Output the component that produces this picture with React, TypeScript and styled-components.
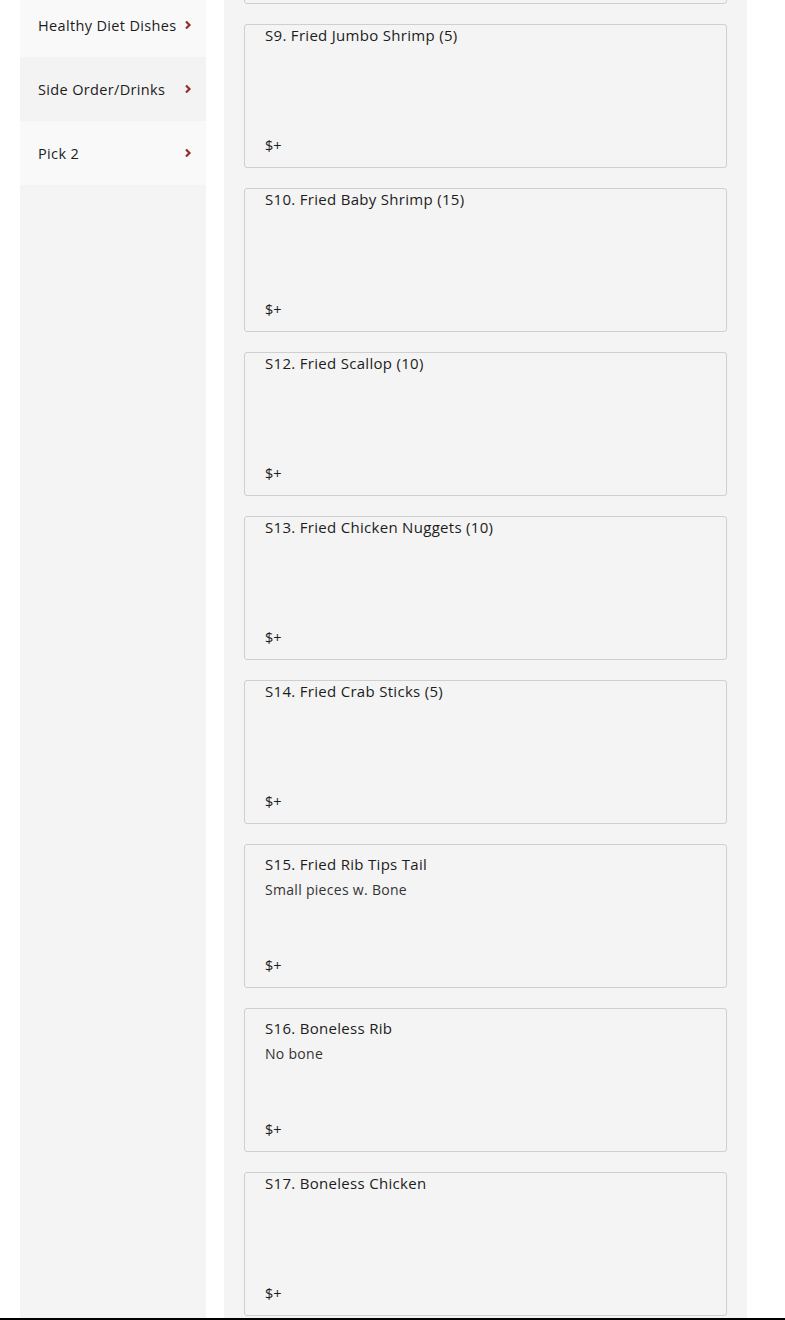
import React from 'react'
import styled, { createGlobalStyle } from 'styled-components'

const GlobalStyle = createGlobalStyle`
  body {
    margin: 0;
    background: #ffffff;
    font-family: 'Open Sans', 'Noto Sans', sans-serif;
    color: #222;
  }
`

const Page = styled.div`
  display: flex;
  align-items: stretch;
  gap: 18px;
  padding-left: 20px;
  margin-top: -160px;
  height: 1500px;
  overflow: hidden;
`

const Sidebar = styled.nav`
  width: 186px;
  flex-shrink: 0;
  padding-top: 153px;
  background: #f4f4f4;
`

const Category = styled.div<{ $alt?: boolean }>`
  height: 64px;
  display: flex;
  align-items: center;
  justify-content: space-between;
  padding: 0 14px 0 18px;
  background: ${p => (p.$alt ? '#f3f3f3' : '#f9f9f9')};
  font-family: 'Open Sans', sans-serif;
  font-size: 14.5px;
  font-weight: 500;
  letter-spacing: 0.35px;
  color: #1c1c1c;
  cursor: pointer;
`

const Chevron = styled.svg`
  width: 8px;
  height: 10px;
  flex-shrink: 0;
`

const Panel = styled.main`
  width: 523px;
  box-sizing: border-box;
  padding: 20px;
  background: #f4f4f4;
  display: flex;
  flex-direction: column;
  gap: 20px;
`

const Card = styled.div<{ $desc?: boolean }>`
  height: 144px;
  flex-shrink: 0;
  box-sizing: border-box;
  border: 1px solid #cfcfcf;
  border-radius: 3px;
  background: #f4f4f4;
  padding: ${p => (p.$desc ? '9px' : '0')} 20px 11px;
  display: flex;
  flex-direction: column;
`

const Title = styled.div`
  font-family: 'Open Sans', sans-serif;
  font-size: 15px;
  font-weight: 500;
  letter-spacing: 0.3px;
  line-height: 20px;
  color: #1c1c1c;
`

const Desc = styled.div`
  font-family: 'Open Sans', sans-serif;
  font-size: 14px;
  line-height: 20px;
  margin-top: 6px;
  color: #333;
  letter-spacing: 0.3px;
`

const Price = styled.div`
  margin-top: auto;
  font-family: 'Open Sans', sans-serif;
  font-size: 14.5px;
  font-weight: 500;
  line-height: 20px;
  color: #1c1c1c;
`

const BottomBar = styled.div`
  position: fixed;
  left: 0;
  right: 0;
  bottom: 0;
  height: 2px;
  background: #000;
`

const categories = ['Healthy Diet Dishes', 'Side Order/Drinks', 'Pick 2']

// first entry is the card scrolled above the top edge, only its bottom border shows
const items: { name?: string; desc?: string }[] = [
  {},
  { name: 'S9. Fried Jumbo Shrimp (5)' },
  { name: 'S10. Fried Baby Shrimp (15)' },
  { name: 'S12. Fried Scallop (10)' },
  { name: 'S13. Fried Chicken Nuggets (10)' },
  { name: 'S14. Fried Crab Sticks (5)' },
  { name: 'S15. Fried Rib Tips Tail', desc: 'Small pieces w. Bone' },
  { name: 'S16. Boneless Rib', desc: 'No bone' },
  { name: 'S17. Boneless Chicken' },
]

const App: React.FC = () => (
  <>
    <GlobalStyle />
    <Page>
      <Sidebar>
        {categories.map((c, i) => (
          <Category key={c} $alt={i % 2 === 1}>
            {c}
            <Chevron viewBox="0 0 8 10">
              <path d="M2 1.5 L5.5 5 L2 8.5" fill="none" stroke="#9a2b2b" strokeWidth="2.2" />
            </Chevron>
          </Category>
        ))}
      </Sidebar>
      <Panel>
        {items.map((it, i) => (
          <Card key={i} $desc={!!it.desc}>
            {it.name ? <Title>{it.name}</Title> : null}
            {it.desc ? <Desc>{it.desc}</Desc> : null}
            {it.name ? <Price>$+</Price> : null}
          </Card>
        ))}
      </Panel>
    </Page>
    <BottomBar />
  </>
)

export default App
